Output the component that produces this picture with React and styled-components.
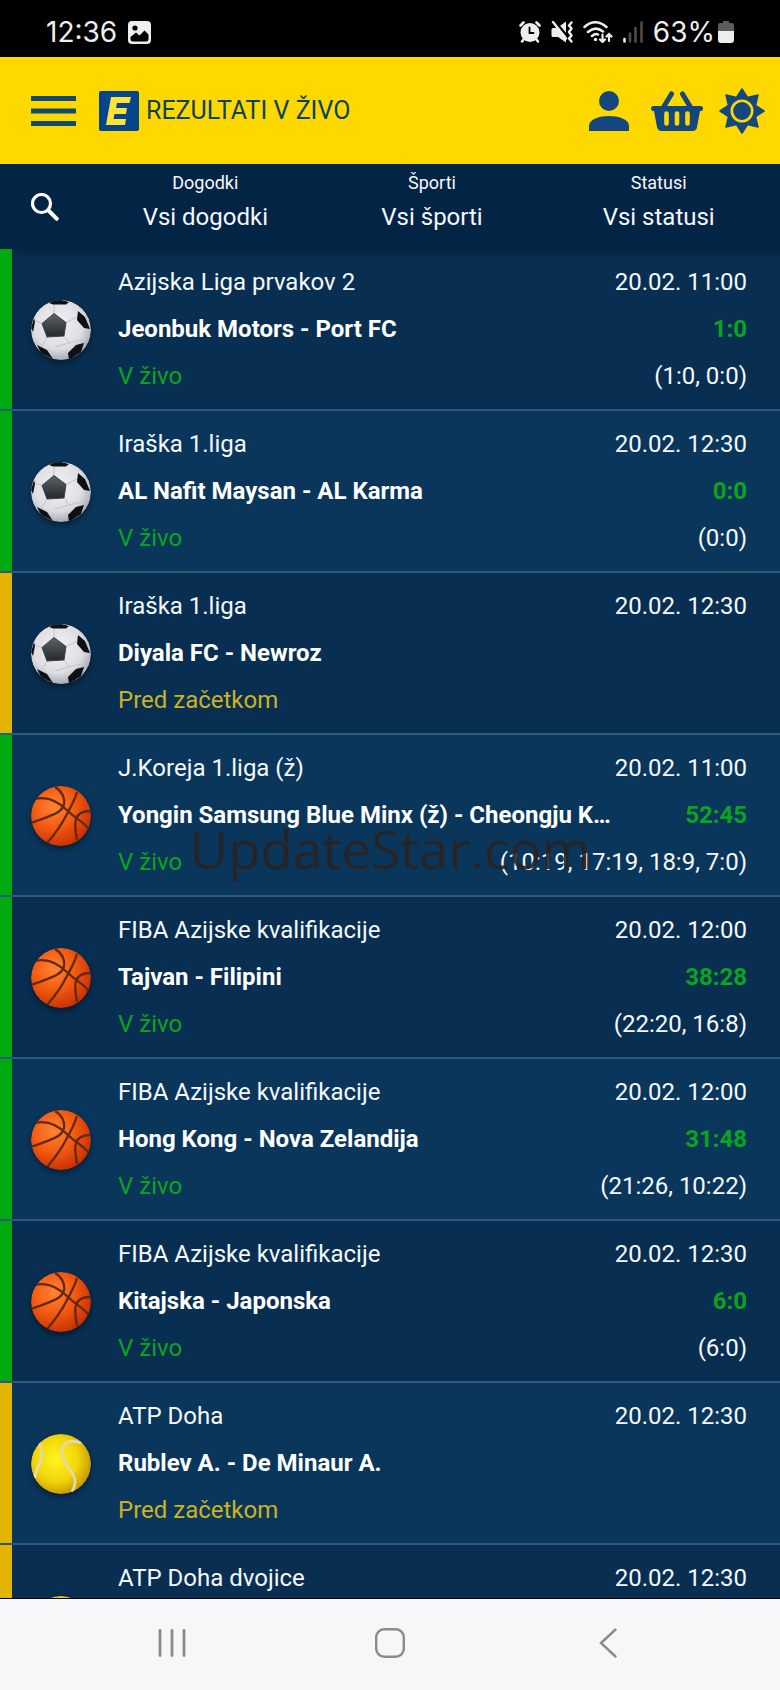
import React from 'react'
import styled, { createGlobalStyle, css } from 'styled-components'

const GlobalStyle = createGlobalStyle`
    * {
        box-sizing: border-box;
    }

    body {
        margin: 0;
        background: #000;
        font-family: Roboto, 'Liberation Sans', sans-serif;
    }

    button, select {
        font-family: inherit;
    }
`

const Screen = styled.div`
    display: flex;
    flex-direction: column;
    height: 100vh;
    overflow: hidden;
    color: #f4f8fc;
`

/* phone status bar */

const StatusBar = styled.div`
    display: flex;
    flex: none;
    align-items: center;
    justify-content: space-between;
    height: 57px;
    padding: 7px 46px 0;
    background: #000;
    color: #eee;
    font-family: Inter, Roboto, sans-serif;
    font-size: 28px;
    line-height: 32px;

    svg {
        display: block;
    }
`

const StatusGroup = styled.div`
    display: flex;
    align-items: center;
    gap: ${props => props.$gap}px;
`

/* app header */

const Header = styled.header`
    display: flex;
    flex: none;
    align-items: center;
    height: 107px;
    padding: 0 15px 0 31px;
    background: #ffd800;
`

const IconButton = styled.button`
    flex: none;
    padding: 0;
    border: 0;
    background: none;
    color: inherit;
    cursor: pointer;

    svg {
        display: block;
    }
`

const Brand = styled.div`
    display: flex;
    flex: 1;
    align-items: center;
    gap: 7px;
    padding-left: 23px;
`

const Title = styled.h1`
    margin: 0;
    color: #0c4257;
    font-size: 25px;
    font-weight: 400;
    line-height: 32px;
`

const HeaderActions = styled.div`
    display: flex;
    align-items: center;
    gap: 16px;
`

/* filters */

const Filters = styled.div`
    position: relative;
    z-index: 1;
    display: flex;
    flex: none;
    align-items: center;
    height: 85px;
    padding: 0 8px 0 31px;
    background: #032445;
    box-shadow: 16px 6px 6px rgba(4, 38, 64, 0.8);
`

const FilterList = styled.div`
    display: grid;
    flex: 1;
    grid-template-columns: repeat(3, 1fr);
    padding-left: 33px;
`

const Filter = styled.label`
    display: flex;
    flex-direction: column;
    align-items: center;
    height: 85px;
    padding-top: 8px;
    font-size: 18px;
    line-height: 22px;
`

const Select = styled.select`
    width: 100%;
    height: 46px;
    padding: 0;
    border: 0;
    background: none;
    color: inherit;
    font-size: 24px;
    text-align: center;
    text-align-last: center;
    appearance: none;
`

/* matches */

const MatchList = styled.ul`
    flex: 1;
    min-height: 0;
    margin: 0;
    padding: 0;
    overflow: hidden;
    border-bottom: 1px solid #00060f;
    background: #082f51;
    list-style: none;
`

const statusColors = {
    live: { band: '#00ab10', text: '#0ba41c' },
    upcoming: { band: '#e2b600', text: '#ccb223' },
}

const Match = styled.li`
    display: flex;
    align-items: center;
    height: 162px;
    padding: 1px 33px 0 0;
    border-bottom: 2px solid #2f5a7d;
    background: #082f51;
    box-shadow: inset 12px 0 ${props => statusColors[props.$status].band};

    &:nth-child(even) {
        background: #0a365c;
    }
`

const BallSlot = styled.div`
    flex: none;
    width: 118px;
    padding-left: 31px;

    svg {
        display: block;
        overflow: visible;
        filter: drop-shadow(0 3px 3px rgba(0, 0, 0, 0.45));
    }
`

const MatchBody = styled.div`
    flex: 1;
    min-width: 0;
`

const Line = styled.div`
    display: flex;
    justify-content: space-between;
    height: 47px;
    font-size: 24px;
    line-height: 47px;
    white-space: nowrap;

    ${props => props.$bold && css`
        color: #fff;
        font-weight: 700;
    `}
`

const Teams = styled.span`
    overflow: hidden;
    text-overflow: ellipsis;
`

const Score = styled.span`
    color: ${statusColors.live.text};
`

const Status = styled.span`
    color: ${props => statusColors[props.$status].text};
`

/* system navigation */

const SystemNav = styled.nav`
    display: grid;
    flex: none;
    grid-template-columns: repeat(3, 1fr);
    align-items: center;
    justify-items: center;
    height: 91px;
    padding: 0 63px 4px;
    background: #f7f7f9;
    color: #8b8b8d;
`

const Watermark = styled.div`
    position: fixed;
    inset: 0;
    z-index: 2;
    display: flex;
    align-items: center;
    justify-content: center;
    padding-top: 6px;
    color: rgba(40, 36, 34, 0.9);
    font-family: 'Open Sans', 'Noto Sans', sans-serif;
    font-size: 53px;
    pointer-events: none;
`

/* icons */

const ImageIcon = () => (
    <svg width="23" height="23" viewBox="0 0 23 23">
        <rect width="23" height="23" rx="4" fill="#eee" />
        <circle cx="7" cy="7" r="2.6" fill="#000" />
        <path d="M2.5 16 8 11.5l3.500 3 5-5 4 4V18a2.500 2.500 0 0 1-2.500 2.500H5A2.500 2.500 0 0 1 2.500 18Z" fill="#000" />
    </svg>
)

const AlarmIcon = () => (
    <svg width="22" height="22" viewBox="0 0 22 22" fill="none" stroke="#eee" strokeLinecap="round">
        <circle cx="11" cy="11.5" r="9.500" fill="#eee" stroke="none" />
        <path d="M1.500 4.500 4.500 1.500M20.500 4.500l-3-3M4.500 18.500 3 20.500M17.500 18.500l1.500 2" strokeWidth="2.600" />
        <path d="M10.500 6.500V12h4" stroke="#000" strokeWidth="1.800" />
    </svg>
)

const MuteIcon = () => (
    <svg width="22" height="22" viewBox="0 0 22 22">
        <path d="M0.500 8.500Q0.500 7 2 7H6L15 0.500V21.500L7 16H2Q0.500 16 0.500 14.500Z" fill="#eee" />
        <path d="M3.500 0 17 16" stroke="#000" strokeWidth="2.500" />
        <path d="M2 1 15 17.500" stroke="#eee" strokeWidth="2.400" strokeLinecap="round" />
        <path d="M20.500 1.500l-2.500 3 2.500 3-2.500 3.500 2.500 3.500-2.500 3 2.500 3" fill="none" stroke="#eee" strokeWidth="2.400" strokeLinejoin="round" strokeLinecap="round" />
    </svg>
)

const WifiIcon = () => (
    <svg width="30" height="22" viewBox="0 0 30 22" fill="none" stroke="#eee" strokeWidth="2.500" strokeLinecap="round">
        <path d="M1.500 6Q12 -3.500 23.500 6M5 11Q12.500 4.500 20 10.500M9 15Q12.500 12 15 13.500" />
        <circle cx="12.500" cy="18.500" r="1.700" fill="#eee" stroke="none" />
        <path d="M19.500 13.500V21M17 18.500l2.500 2.500 2.500-2.500M26 20V13M23.500 15.500 26 13l2.500 2.500" strokeWidth="2.200" />
    </svg>
)

const SignalIcon = () => (
    <svg width="20" height="22" viewBox="0 0 20 22" strokeWidth="2.600" strokeLinecap="round" stroke="#4c4c4c">
        <path d="M1.500 18V20.500" stroke="#eee" />
        <path d="M7 12.500V20.500M12.500 7V20.500M18.500 1.500V20.500" />
    </svg>
)

const BatteryIcon = () => (
    <svg width="16" height="22" viewBox="0 0 16 22">
        <path d="M5 0h6v2h3q2 0 2 2v6H0V4q0-2 2-2h3Z" fill="#5c5c5c" />
        <path d="M0 10h16v9q0 3-3 3H3q-3 0-3-3Z" fill="#eee" />
    </svg>
)

const MenuIcon = () => (
    <svg width="45" height="30" viewBox="0 0 45 30" fill="#114a6b">
        <path d="M0 0h45v5H0zM0 12.500h45v5H0zM0 25h45v5H0z" />
    </svg>
)

const LogoIcon = () => (
    <svg width="40" height="40" viewBox="0 0 40 40">
        <rect width="40" height="40" rx="2" fill="#04458c" />
        <path d="M12 6H32L30.500 12H18L17 17H28L27 23H15.500L14.500 28H27L26 34H7Z" fill="#ffe23c" />
    </svg>
)

const UserIcon = () => (
    <svg width="52" height="40" viewBox="-6 0 52 40" fill="#14477e">
        <circle cx="20" cy="10" r="10" />
        <path d="M0 40V35C0 28 11 25 20 25S40 28 40 35V40Z" />
    </svg>
)

const BasketIcon = () => (
    <svg width="52" height="40" viewBox="0 0 52 40">
        <path d="M12 17 20.500 3M40 17 31.500 3" stroke="#14477e" strokeWidth="5" strokeLinecap="round" />
        <path d="M2.500 15H49.500Q52 15 52 17.500 52 20 49.500 20H49L46 36Q45.500 40 41.500 40H10.500Q7 40 6 36L3 20H2.500Q0 20 0 17.500 0 15 2.500 15Z" fill="#14477e" />
        <path d="M15.500 22.500V32.500M26 22.500V32.500M36.500 22.500V32.500" stroke="#ffd800" strokeWidth="4.600" strokeLinecap="round" />
    </svg>
)

const SunIcon = () => (
    <svg width="46" height="46" viewBox="0 0 46 46">
        <path
            d="M23 1 28.500 9.500 39 7 36.500 17.500 45 23 36.500 28.500 39 39 28.500 36.500 23 45 17.500 36.500 7 39 9.500 28.500 1 23 9.500 17.500 7 7 17.500 9.500Z"
            fill="#14477e"
            stroke="#14477e"
            strokeWidth="1.500"
            strokeLinejoin="round"
        />
        <circle cx="23" cy="23" r="10.200" fill="#14477e" stroke="#ffd800" strokeWidth="2.600" />
    </svg>
)

const SearchIcon = () => (
    <svg width="28" height="28" viewBox="0 0 28 28" fill="none" stroke="#fff">
        <circle cx="10.500" cy="10.500" r="9" strokeWidth="3.200" />
        <path d="M17 17 27 27" strokeWidth="4" />
    </svg>
)

const RecentsIcon = () => (
    <svg width="28" height="30" viewBox="0 0 28 30" stroke="currentColor" strokeWidth="2.800" strokeLinecap="round">
        <path d="M2 2.500V27.500M14 2.500V27.500M26 2.500V27.500" />
    </svg>
)

const HomeIcon = () => (
    <svg width="30" height="30" viewBox="0 0 30 30" fill="none" stroke="currentColor" strokeWidth="2.400">
        <rect x="1.200" y="1.200" width="27.600" height="27.600" rx="8" />
    </svg>
)

const BackIcon = () => (
    <svg width="18" height="30" viewBox="0 0 18 30" fill="none" stroke="currentColor" strokeWidth="2.400" strokeLinecap="round">
        <path d="M16.500 1.500 2 15 16.500 28.500" />
    </svg>
)

const HiddenDefs = styled.svg`
    position: absolute;
`

const BallDefs = () => (
    <HiddenDefs width="0" height="0">
        <defs>
            <clipPath id="ballClip">
                <circle cx="30" cy="30" r="30" />
            </clipPath>
            <radialGradient id="footballFill" cx="0.45" cy="0.4" r="0.6">
                <stop offset="0" stopColor="#f4f4f6" />
                <stop offset="0.7" stopColor="#dcdce2" />
                <stop offset="1" stopColor="#a9acb8" />
            </radialGradient>
            <linearGradient id="pentagonFill" x1="0" y1="0" x2="0" y2="1">
                <stop offset="0" stopColor="#5c6468" />
                <stop offset="1" stopColor="#23282c" />
            </linearGradient>
            <radialGradient id="basketballFill" cx="0.38" cy="0.35" r="0.68">
                <stop offset="0" stopColor="#ff8436" />
                <stop offset="0.5" stopColor="#f45c12" />
                <stop offset="1" stopColor="#c93003" />
            </radialGradient>
            <radialGradient id="tennisFill" cx="0.42" cy="0.42" r="0.6">
                <stop offset="0" stopColor="#fff51e" />
                <stop offset="0.6" stopColor="#f2d60c" />
                <stop offset="1" stopColor="#c89a04" />
            </radialGradient>
        </defs>
    </HiddenDefs>
)

const Football = () => (
    <svg width="60" height="60" viewBox="0 0 60 60">
        <g clipPath="url(#ballClip)">
            <circle cx="30" cy="30" r="30" fill="url(#footballFill)" />
            <path d="M23 13.500V4M35 22.500 46 17M33 36 38 43M16 37 11 46M11 23.500 4 21M38 43 24 47M38 43 50 40" stroke="#c2c4cc" fill="none" />
            <path d="M23 13.500 35 22.500 33 36 16 37 11 23.500Z" fill="url(#pentagonFill)" stroke="#3c4448" strokeLinejoin="round" />
            <path d="M18 3 26 -1 38 2 35 4.500H22ZM47 11 54 17 59 29 53 28 46 20ZM0 28 3 18 4 22 2 32ZM6 45 16 50 22 59 10 53ZM37 53 45 45 53 43 50 52 38 60Z" fill="#0e1014" />
        </g>
    </svg>
)

const Basketball = () => (
    <svg width="60" height="60" viewBox="0 0 60 60">
        <g clipPath="url(#ballClip)">
            <circle cx="30" cy="30" r="30" fill="url(#basketballFill)" />
            <path
                d="M4 13C16 10 28 16 37 25S51 34 58 43M24 1C31 5 34 12 33 18 31 28 18 30 0 37M46 6C43 16 39 22 36 28 30 40 24 48 16 57M59 25C52 25 47 27 45 33 43 40 45 46 46 54"
                fill="none"
                stroke="#64290c"
                strokeWidth="2.300"
            />
        </g>
    </svg>
)

const TennisBall = () => (
    <svg width="60" height="60" viewBox="0 0 60 60">
        <g clipPath="url(#ballClip)">
            <circle cx="30" cy="30" r="30" fill="url(#tennisFill)" />
            <path
                d="M8 8C12 17 12 24 8 31 6 35 4 38 4 44M50 9C40 5 31 8 31 18 31 31 45 38 44 48 44 51 43 54 41 58"
                fill="none"
                stroke="#e2d9ac"
                strokeWidth="2.800"
            />
        </g>
    </svg>
)

const balls = {
    football: Football,
    basketball: Basketball,
    tennis: TennisBall,
}

const statusLabels = {
    live: 'V živo',
    upcoming: 'Pred začetkom',
}

const filters = [
    { label: 'Dogodki', value: 'Vsi dogodki' },
    { label: 'Športi', value: 'Vsi športi' },
    { label: 'Statusi', value: 'Vsi statusi' },
]

const matches = [
    { sport: 'football', league: 'Azijska Liga prvakov 2', time: '20.02. 11:00', teams: 'Jeonbuk Motors - Port FC', score: '1:0', parts: '(1:0, 0:0)', status: 'live' },
    { sport: 'football', league: 'Iraška 1.liga', time: '20.02. 12:30', teams: 'AL Nafit Maysan - AL Karma', score: '0:0', parts: '(0:0)', status: 'live' },
    { sport: 'football', league: 'Iraška 1.liga', time: '20.02. 12:30', teams: 'Diyala FC - Newroz', status: 'upcoming' },
    { sport: 'basketball', league: 'J.Koreja 1.liga (ž)', time: '20.02. 11:00', teams: 'Yongin Samsung Blue Minx (ž) - Cheongju K…', score: '52:45', parts: '(10:19, 17:19, 18:9, 7:0)', status: 'live' },
    { sport: 'basketball', league: 'FIBA Azijske kvalifikacije', time: '20.02. 12:00', teams: 'Tajvan - Filipini', score: '38:28', parts: '(22:20, 16:8)', status: 'live' },
    { sport: 'basketball', league: 'FIBA Azijske kvalifikacije', time: '20.02. 12:00', teams: 'Hong Kong - Nova Zelandija', score: '31:48', parts: '(21:26, 10:22)', status: 'live' },
    { sport: 'basketball', league: 'FIBA Azijske kvalifikacije', time: '20.02. 12:30', teams: 'Kitajska - Japonska', score: '6:0', parts: '(6:0)', status: 'live' },
    { sport: 'tennis', league: 'ATP Doha', time: '20.02. 12:30', teams: 'Rublev A. - De Minaur A.', status: 'upcoming' },
    { sport: 'tennis', league: 'ATP Doha dvojice', time: '20.02. 12:30', status: 'upcoming' },
]

const MatchRow = ({ match }) => {
    const Ball = balls[match.sport]
    return (
        <Match $status={match.status}>
            <BallSlot>
                <Ball />
            </BallSlot>
            <MatchBody>
                <Line>
                    <span>{match.league}</span>
                    <span>{match.time}</span>
                </Line>
                <Line $bold>
                    <Teams>{match.teams}</Teams>
                    <Score>{match.score}</Score>
                </Line>
                <Line>
                    {match.teams && <Status $status={match.status}>{statusLabels[match.status]}</Status>}
                    <span>{match.parts}</span>
                </Line>
            </MatchBody>
        </Match>
    )
}

export default function App() {
    return (
        <Screen>
            <GlobalStyle />
            <BallDefs />
            <StatusBar>
                <StatusGroup $gap={11}>
                    <span>12:36</span>
                    <ImageIcon />
                </StatusGroup>
                <StatusGroup $gap={10}>
                    <AlarmIcon />
                    <MuteIcon />
                    <WifiIcon />
                    <SignalIcon />
                    <StatusGroup $gap={3}>
                        <span>63%</span>
                        <BatteryIcon />
                    </StatusGroup>
                </StatusGroup>
            </StatusBar>
            <Header>
                <IconButton aria-label="Meni">
                    <MenuIcon />
                </IconButton>
                <Brand>
                    <LogoIcon />
                    <Title>REZULTATI V ŽIVO</Title>
                </Brand>
                <HeaderActions>
                    <IconButton aria-label="Profil">
                        <UserIcon />
                    </IconButton>
                    <IconButton aria-label="Košarica">
                        <BasketIcon />
                    </IconButton>
                    <IconButton aria-label="Tema">
                        <SunIcon />
                    </IconButton>
                </HeaderActions>
            </Header>
            <Filters>
                <IconButton aria-label="Iskanje">
                    <SearchIcon />
                </IconButton>
                <FilterList>
                    {filters.map(filter => (
                        <Filter key={filter.label}>
                            {filter.label}
                            <Select>
                                <option>{filter.value}</option>
                            </Select>
                        </Filter>
                    ))}
                </FilterList>
            </Filters>
            <MatchList>
                {matches.map((match, index) => (
                    <MatchRow key={index} match={match} />
                ))}
            </MatchList>
            <SystemNav>
                <IconButton aria-label="Nedavno">
                    <RecentsIcon />
                </IconButton>
                <IconButton aria-label="Domov">
                    <HomeIcon />
                </IconButton>
                <IconButton aria-label="Nazaj">
                    <BackIcon />
                </IconButton>
            </SystemNav>
            <Watermark>UpdateStar.com</Watermark>
        </Screen>
    )
}
